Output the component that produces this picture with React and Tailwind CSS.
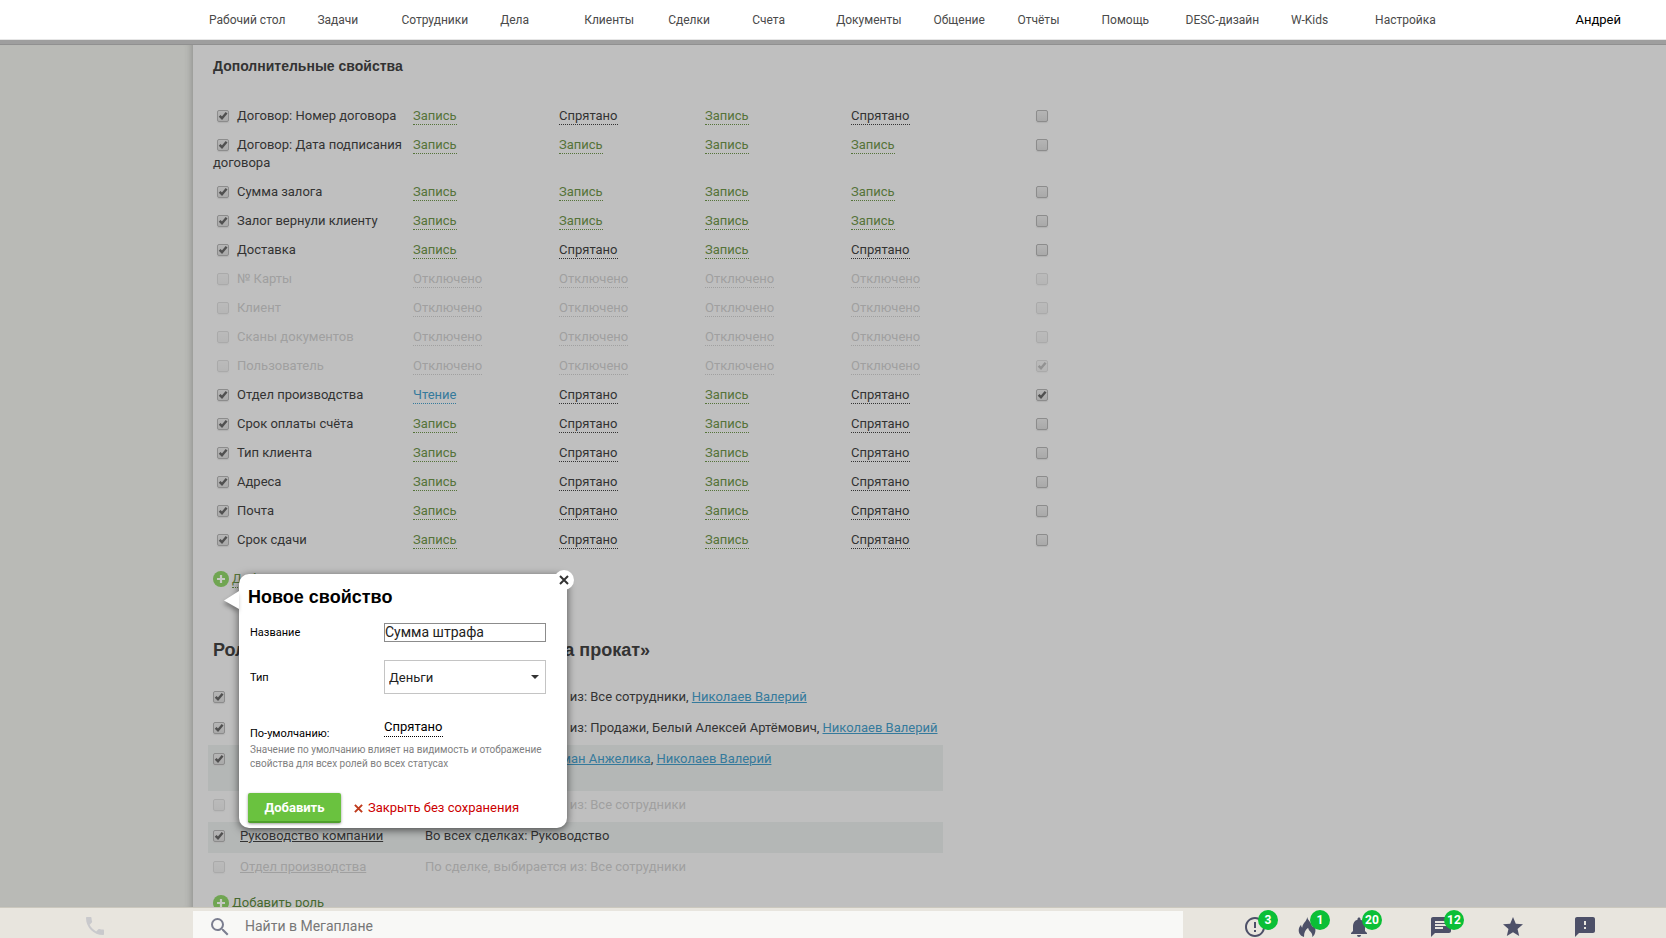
import React from "react";
import {
  MdErrorOutline,
  MdNotifications,
  MdChat,
  MdStar,
  MdFeedback,
  MdPhone,
  MdSearch,
} from "react-icons/md";

const NAV = [
  "Рабочий стол",
  "Задачи",
  "Сотрудники",
  "Дела",
  "Клиенты",
  "Сделки",
  "Счета",
  "Документы",
  "Общение",
  "Отчёты",
  "Помощь",
  "DESC-дизайн",
  "W-Kids",
  "Настройка",
];

const W = "Запись";
const H = "Спрятано";
const R = "Чтение";
const O = "Отключено";

const PROPERTIES = [
  { name: "Договор: Номер договора", on: true, access: [W, H, W, H], required: false },
  { name: "Договор: Дата подписания договора", on: true, access: [W, W, W, W], required: false },
  { name: "Сумма залога", on: true, access: [W, W, W, W], required: false },
  { name: "Залог вернули клиенту", on: true, access: [W, W, W, W], required: false },
  { name: "Доставка", on: true, access: [W, H, W, H], required: false },
  { name: "№ Карты", on: false, access: [O, O, O, O], required: false },
  { name: "Клиент", on: false, access: [O, O, O, O], required: false },
  { name: "Сканы документов", on: false, access: [O, O, O, O], required: false },
  { name: "Пользователь", on: false, access: [O, O, O, O], required: true },
  { name: "Отдел производства", on: true, access: [R, H, W, H], required: true },
  { name: "Срок оплаты счёта", on: true, access: [W, H, W, H], required: false },
  { name: "Тип клиента", on: true, access: [W, H, W, H], required: false },
  { name: "Адреса", on: true, access: [W, H, W, H], required: false },
  { name: "Почта", on: true, access: [W, H, W, H], required: false },
  { name: "Срок сдачи", on: true, access: [W, H, W, H], required: false },
];

const ACCESS_COLOR = {
  [W]: "text-[#557339]",
  [H]: "text-[#333333]",
  [R]: "text-[#357a9c]",
  [O]: "text-[#a0a0a0]",
};

const ROLES = [
  { name: "Ответственный", on: true, rule: "По сделке, выбирается из: Все сотрудники, ", people: ["Николаев Валерий"] },
  { name: "Менеджер", on: true, rule: "По сделке, выбирается из: Продажи, Белый Алексей Артёмович, ", people: ["Николаев Валерий"] },
  { name: "Аудиторы", on: true, rule: "Во всех сделках: ", people: ["Кауфман Анжелика", "Николаев Валерий"], shaded: true, tall: true },
  { name: "Участники", on: false, rule: "По сделке, выбирается из: Все сотрудники", people: [] },
  { name: "Руководство компании", on: true, rule: "Во всех сделках: Руководство", people: [], shaded: true },
  { name: "Отдел производства", on: false, rule: "По сделке, выбирается из: Все сотрудники", people: [] },
];

function Check({ id, label, checked, dim }) {
  return (
    <span className={`inline-grid size-3 align-middle ${dim ? "opacity-40" : ""}`}>
      <input
        id={id}
        type="checkbox"
        aria-label={label}
        defaultChecked={checked}
        className="peer col-start-1 row-start-1 size-3 appearance-none rounded-xs border border-[#8c8c8c] bg-linear-to-b from-[#b5b5b5] to-[#a9a9a9] shadow-[0_1px_1px_#b0b0b0]"
      />
      <svg
        viewBox="0 0 12 12"
        className="pointer-events-none invisible col-start-1 row-start-1 size-3 peer-checked:visible"
        fill="none"
        stroke="#505050"
        strokeWidth="2.4"
      >
        <path d="M2.6 5.8 5 8.2 9.6 2.8" />
      </svg>
    </span>
  );
}

function PlusIcon() {
  return (
    <svg viewBox="0 0 16 16" className="size-4 shrink-0">
      <circle cx="8" cy="8" r="8" fill="#70a552" />
      <path d="M8 4v8M4 8h8" stroke="#c6c9c3" strokeWidth="2.2" />
    </svg>
  );
}

function FlameIcon() {
  return (
    <svg viewBox="0 0 24 24" className="size-6" fill="currentColor">
      <path d="M12.2 2c.5 3.3 4.9 6.200 4.900 9.800 0 0 1-.7 1-2.300 1.700 1.800 2.700 4.200 2.300 6.800-.3 2.600-1.500 4.600-3.200 5.700.5-2.600-.6-4.300-2.200-5.800-1.100-1-1.800-2-1.800-3.400-2.500 1.400-4.300 4.700-4.200 9.200C6 21 3.700 18.800 3.700 15.200c0-2.200 1-4 2.400-5.500 0 1.500.5 2.400 1.200 2.900C7.400 8.300 11.800 6.400 12.200 2z" />
    </svg>
  );
}

function BarButton({ label, badge, className, children }) {
  return (
    <button type="button" aria-label={label} className={`relative size-6 text-[#4d5068] ${className}`}>
      {children}
      {badge && (
        <span className="absolute -top-[5px] left-[15px] flex size-5 items-center justify-center rounded-full bg-[#0bbf36] text-[12px] font-bold text-white">
          {badge}
        </span>
      )}
    </button>
  );
}

function NewPropertyDialog() {
  return (
    <section
      role="dialog"
      aria-labelledby="dialog-title"
      className="absolute top-1 left-[26px] z-10 w-[328px] rounded-[10px] bg-white px-[9px] pt-[11px] pb-[5px] text-black shadow-[0_2px_8px_rgba(0,0,0,0.6)]"
    >
      <svg viewBox="0 0 15 20" className="absolute top-4 -left-[15px] h-5 w-[15px] drop-shadow-[-1px_3px_2px_rgba(0,0,0,0.35)]">
        <path d="M15 1 0 10.500 15 19z" fill="#fff" />
      </svg>
      <button
        type="button"
        aria-label="Закрыть"
        className="absolute -top-1 -right-[7px] flex size-5 items-center justify-center rounded-full bg-white"
      >
        <svg viewBox="0 0 10 10" className="size-[10px]" stroke="#333" strokeWidth="2">
          <path d="M1 1l8 8M9 1 1 9" />
        </svg>
      </button>

      <h2 id="dialog-title" className="font-['Liberation_Sans',sans-serif] text-[18px] leading-6 font-bold">
        Новое свойство
      </h2>

      <form className="flex flex-col">
        <div className="mt-[13px] flex h-5 items-center pl-[2px]">
          <label htmlFor="prop-name" className="w-[134px] pt-[3px] text-[11px]">
            Название
          </label>
          <input
            id="prop-name"
            defaultValue="Сумма штрафа"
            className="h-[19px] w-[162px] border border-[#8c8c8c] bg-white text-[14px] text-[#222]"
          />
        </div>

        <div className="mt-[18px] flex h-[34px] items-center pl-[2px]">
          <label htmlFor="prop-type" className="w-[134px] pt-[3px] text-[11px]">
            Тип
          </label>
          <span className="grid w-[162px] items-center">
            <select
              id="prop-type"
              className="col-start-1 row-start-1 h-[34px] w-full appearance-none border border-[#c4c4c4] bg-white pt-px pl-1 text-[13px] text-[#222]"
            >
              <option>Деньги</option>
            </select>
            <svg viewBox="0 0 8 4" className="pointer-events-none col-start-1 row-start-1 mr-[7px] h-1 w-2 justify-self-end">
              <path d="M0 0h8L4 4z" fill="#333" />
            </svg>
          </span>
        </div>

        <div className="mt-5 flex h-[29px] pl-[2px]">
          <span className="w-[134px] self-end pb-px text-[11px] leading-4">По-умолчанию:</span>
          <button type="button" className="mt-1 h-[19px] border-b border-dotted border-black text-[13px] leading-[18px]">
            Спрятано
          </button>
        </div>
        <p className="pl-[2px] text-[10px] leading-[14px] text-[#808080]">
          Значение по умолчанию влияет на видимость и отображение свойства для всех ролей во всех статусах
        </p>

        <div className="mt-[22px] flex items-center gap-[13px]">
          <button
            type="button"
            className="h-[30px] w-[93px] rounded-xs border-b-2 border-[#4f9f2c] bg-[#6ac23f] pt-[2px] text-[13px] font-bold text-white shadow-[0_1px_3px_rgba(0,0,0,0.4)]"
          >
            Добавить
          </button>
          <button type="button" className="flex items-center gap-[5px] text-[13px] text-[#cc0000]">
            <svg viewBox="0 0 10 10" className="size-[9px]" stroke="#bf3a1c" strokeWidth="2.200">
              <path d="M1 1l8 8M9 1 1 9" />
            </svg>
            Закрыть без сохранения
          </button>
        </div>
      </form>
    </section>
  );
}

export default function App() {
  return (
    <div className="flex h-screen flex-col overflow-hidden bg-[#bfbfbf] font-['Roboto','Liberation_Sans',sans-serif] text-[13px] text-[#333]">
      <header className="flex h-10 shrink-0 items-center justify-between border-b border-[#e6e6e6] bg-white pl-[209px]">
        <nav className="flex text-[12px] text-[#4a4a4a]">
          {NAV.map((item) => (
            <a key={item} href="#" className="min-w-[84px] pr-8 whitespace-nowrap">
              {item}
            </a>
          ))}
        </nav>
        <a href="#" className="mr-[45px] text-[13px] text-black">
          Андрей
        </a>
      </header>
      <div className="h-[5px] shrink-0 border-b border-[#909090] bg-[#9e9e9e]" />

      <div className="flex min-h-0 flex-1">
        <aside className="w-[193px] shrink-0 bg-[#b9bab6] shadow-[inset_-8px_0_8px_-8px_rgba(0,0,0,0.3)]" />

        <main className="min-w-0 flex-1 overflow-hidden pl-5">
          <h2 className="pt-3 font-['Liberation_Sans',sans-serif] text-[14px] leading-[18px] font-bold">
            Дополнительные свойства
          </h2>

          <table className="mt-[27px] table-fixed border-collapse text-left">
            <colgroup>
              <col className="w-[200px]" />
              <col className="w-[146px]" />
              <col className="w-[146px]" />
              <col className="w-[146px]" />
              <col className="w-[146px]" />
              <col className="w-[100px]" />
            </colgroup>
            <tbody>
              {PROPERTIES.map((p, i) => (
                <tr key={p.name} className="align-top leading-[18px]">
                  <td className={`pt-[5px] pb-[6px] ${p.on ? "" : "text-[#a0a0a0]"}`}>
                    <span className="mr-2 ml-1 inline-flex h-[18px] items-center align-top">
                      <Check id={`prop-${i}`} checked={p.on} dim={!p.on} />
                    </span>
                    <label htmlFor={`prop-${i}`}>{p.name}</label>
                  </td>
                  {p.access.map((a, j) => (
                    <td key={j} className="pt-[5px]">
                      <button
                        type="button"
                        className={`block h-[18px] border-b border-dotted border-current leading-[17px] ${ACCESS_COLOR[a]}`}
                      >
                        {a}
                      </button>
                    </td>
                  ))}
                  <td className="pt-[5px] pl-[39px]">
                    <span className="flex h-[18px] items-center">
                      <Check label={`${p.name}: обязательное`} checked={p.required} dim={!p.on} />
                    </span>
                  </td>
                </tr>
              ))}
            </tbody>
          </table>

          <div className="relative mt-[15px] flex h-[18px] items-center gap-[3px]">
            <PlusIcon />
            <button type="button" className="border-b border-dotted border-current leading-[17px] text-[#557339]">
              Добавить свойство
            </button>
            <NewPropertyDialog />
          </div>

          <h2 className="mt-[50px] font-['Liberation_Sans',sans-serif] text-[18px] leading-6 font-bold whitespace-nowrap">
            Роли участников по схеме «Костюмы на прокат»
          </h2>

          <table className="mt-[21px] -ml-[5px] w-[735px] table-fixed border-collapse text-left">
            <colgroup>
              <col className="w-8" />
              <col className="w-[185px]" />
              <col />
            </colgroup>
            <tbody>
              {ROLES.map((r, i) => (
                <tr
                  key={r.name}
                  className={`align-top ${r.tall ? "h-[46px]" : "h-[31px]"} ${r.shaded ? "bg-[#b4b7b6]" : ""} ${r.on ? "" : "text-[#a0a0a0]"}`}
                >
                  <td className="pt-[5px] pl-[5px]">
                    <span className="flex h-[18px] items-center">
                      <Check id={`role-${i}`} label={r.name} checked={r.on} dim={!r.on} />
                    </span>
                  </td>
                  <td className="pt-[5px] leading-[18px]">
                    <a href="#" className="underline">
                      {r.name}
                    </a>
                  </td>
                  <td className="pt-[5px] leading-[18px] whitespace-nowrap">
                    {r.rule}
                    {r.people.map((person, j) => (
                      <React.Fragment key={person}>
                        {j > 0 && ", "}
                        <a href="#" className="text-[#357a9c] underline">
                          {person}
                        </a>
                      </React.Fragment>
                    ))}
                  </td>
                </tr>
              ))}
            </tbody>
          </table>

          <div className="mt-[10px] flex h-[18px] items-center gap-[3px] text-[#46692f]">
            <PlusIcon />
            <button type="button" className="border-b border-dotted border-current leading-[18px]">
              Добавить роль
            </button>
          </div>
        </main>
      </div>

      <footer className="flex h-[31px] shrink-0 overflow-hidden border-t border-[#cbc8be] bg-[#e8e5de]">
        <div className="w-[193px] shrink-0 pt-[6px] pl-[83px]">
          <button type="button" aria-label="Телефон" className="text-[#c9c9cc]">
            <MdPhone className="size-6" />
          </button>
        </div>
        <form className="mt-[3px] flex min-w-0 flex-1 items-start bg-[#f8f8f6] pt-1 pl-[15px]">
          <label htmlFor="search" aria-label="Поиск" className="text-[#7b7e90]">
            <MdSearch className="size-6" />
          </label>
          <input
            id="search"
            placeholder="Найти в Мегаплане"
            className="ml-[13px] h-[22px] min-w-0 flex-1 bg-transparent text-[14px] outline-none placeholder:text-[#777]"
          />
        </form>
        <div className="flex shrink-0 pt-[7px] pr-[69px] pl-[60px]">
          <BarButton label="Важное" badge="3" className="mr-7">
            <MdErrorOutline className="size-6" />
          </BarButton>
          <BarButton label="Горящие" badge="1" className="mr-7">
            <FlameIcon />
          </BarButton>
          <BarButton label="Уведомления" badge="20" className="mr-[58px]">
            <MdNotifications className="size-6" />
          </BarButton>
          <BarButton label="Сообщения" badge="12" className="mr-12">
            <MdChat className="size-6" />
          </BarButton>
          <BarButton label="Избранное" className="mr-12">
            <MdStar className="size-6" />
          </BarButton>
          <BarButton label="Отзыв" className="">
            <MdFeedback className="size-6" />
          </BarButton>
        </div>
      </footer>
    </div>
  );
}
